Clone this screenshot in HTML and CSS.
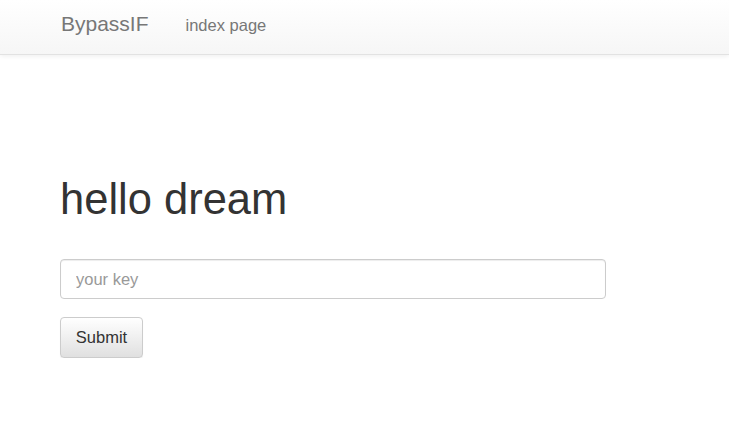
FILE: index.html
```html
<!DOCTYPE html>
<html>
<head>
<meta charset="utf-8">
<link rel="stylesheet" href="styles.css">
</head>
<body>
<nav class="navbar">
  <div class="nav-inner">
    <a class="brand" href="#">BypassIF</a>
    <a class="nav-link" href="#">index page</a>
  </div>
</nav>
<main class="content">
  <h1 class="title">hello dream</h1>
  <form class="key-form">
    <input class="key-input" type="text" placeholder="your key">
    <button class="btn" type="button">Submit</button>
  </form>
</main>
</body>
</html>
```

FILE: styles.css
```css
html, body {
  margin: 0;
  padding: 0;
  background: #fff;
  font-family: "Liberation Sans", Arial, sans-serif;
  color: #333;
}
.navbar {
  height: 54px;
  border-bottom: 1px solid #e2e2e2;
  background: linear-gradient(to bottom, #ffffff 0%, #f6f6f6 100%);
  box-shadow: inset 0 1px 0 rgba(255,255,255,.15), 0 1px 5px rgba(0,0,0,.075);
}
.nav-inner {
  display: flex;
  align-items: baseline;
  gap: 37px;
  padding: 12px 0 0 61px;
}
.brand {
  font-size: 21px;
  color: #777;
  text-decoration: none;
}
.nav-link {
  font-size: 16.5px;
  color: #777;
  text-decoration: none;
}
.content {
  padding: 0 0 0 60px;
}
.title {
  margin: 121px 0 0 0;
  font-size: 43.5px;
  line-height: 46px;
  font-weight: 500;
  color: #333;
}
.key-form {
  display: flex;
  flex-direction: column;
  align-items: flex-start;
  gap: 18px;
  margin-top: 37px;
}
.key-input {
  box-sizing: border-box;
  width: 546px;
  height: 40px;
  padding: 0 15px;
  border: 1px solid #ccc;
  border-radius: 4px;
  font-family: "Liberation Sans", Arial, sans-serif;
  font-size: 16.5px;
  color: #555;
  box-shadow: inset 0 1px 1px rgba(0,0,0,.075);
  outline: none;
}
.key-input::placeholder {
  color: #999;
}
.btn {
  box-sizing: border-box;
  width: 83px;
  height: 41px;
  border: 1px solid #ccc;
  border-radius: 4px;
  background: linear-gradient(to bottom, #ffffff 0%, #e0e0e0 100%);
  box-shadow: inset 0 1px 0 rgba(255,255,255,.15), 0 1px 1px rgba(0,0,0,.075);
  font-family: "Liberation Sans", Arial, sans-serif;
  font-size: 16.5px;
  color: #333;
  padding: 0;
}
```
